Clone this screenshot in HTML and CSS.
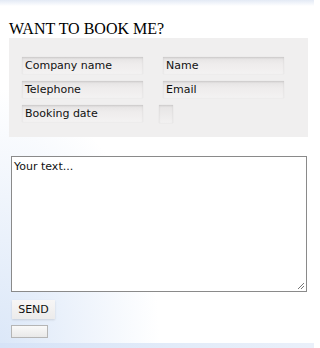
FILE: index.html
```html
<!DOCTYPE html>
<html>
<head>
<meta charset="utf-8">
<link rel="stylesheet" href="styles.css">
</head>
<body>
<div class="topband"></div>
<div class="page">
  <h1 class="title">WANT TO BOOK ME?</h1>
  <div class="panel">
    <div class="grid">
      <div class="field">Company name</div>
      <div class="field">Name</div>
      <div class="field">Telephone</div>
      <div class="field">Email</div>
      <div class="field">Booking date</div>
      <div class="tiny"></div>
    </div>
  </div>
  <div class="message"><span>Your text...</span><svg class="grip" width="9" height="9" viewBox="0 0 9 9"><path d="M8 2 L2 8 M8 5 L5 8" stroke="#777" stroke-width="1"/></svg></div>
  <div class="send">SEND</div>
  <div class="blank"></div>
</div>
<div class="bottomband"></div>
</body>
</html>
```
FILE: styles.css
```css
html, body {
  margin: 0;
  padding: 0;
}
body {
  width: 314px;
  height: 348px;
  overflow: hidden;
  display: flex;
  flex-direction: column;
  background:
    radial-gradient(ellipse 160px 260px at 0% 100%, #dbe7f8 0%, rgba(255,255,255,0) 100%),
    #ffffff;
}
.topband {
  height: 6px;
  flex: none;
  background: linear-gradient(to bottom, #e3eaf5 0%, #f6f8fc 70%, #ffffff 100%);
}
.page {
  flex: 1;
  padding-left: 9px;
  padding-top: 14px;
}
.title {
  margin: 0;
  font-family: "Liberation Serif", serif;
  font-weight: normal;
  font-size: 16px;
  line-height: 18px;
  color: #000;
}
.panel {
  width: 299px;
  height: 99px;
  box-sizing: border-box;
  background: #f0efef;
  padding: 19px 0 0 13px;
}
.grid {
  display: grid;
  grid-template-columns: 121px 121px;
  column-gap: 20px;
  row-gap: 7px;
  align-items: start;
}
.field {
  height: 17px;
  box-sizing: border-box;
  padding-left: 3px;
  font-family: "DejaVu Sans", sans-serif;
  font-size: 11px;
  line-height: 17px;
  color: #111;
  background: linear-gradient(to bottom, #e4e2e2 0%, #eeecec 40%, #f3f2f2 100%);
  box-shadow: inset 0 1px 2px rgba(0,0,0,0.12), 0 0 1px rgba(0,0,0,0.08);
}
.tiny {
  width: 14px;
  height: 18px;
  margin-left: -4px;
  background: linear-gradient(to bottom, #e6e4e4 0%, #f2f1f1 100%);
  box-shadow: inset 0 1px 2px rgba(0,0,0,0.12), 0 0 1px rgba(0,0,0,0.1);
}
.message {
  position: relative;
  margin-top: 19px;
  margin-left: 2px;
  width: 296px;
  height: 136px;
  box-sizing: border-box;
  border: 1px solid #8a8a8a;
  background: #fff;
  padding: 3px 2px;
  font-family: "DejaVu Sans", sans-serif;
  font-size: 11px;
  line-height: 13px;
  color: #111;
}
.grip {
  position: absolute;
  right: 1px;
  bottom: 1px;
}
.send {
  margin-top: 8px;
  margin-left: 3px;
  width: 43px;
  height: 19px;
  font-family: "DejaVu Sans", sans-serif;
  font-size: 11px;
  line-height: 19px;
  text-align: center;
  color: #111;
  background: linear-gradient(to bottom, #f7f6f6 0%, #ecebeb 100%);
  box-shadow: 0 1px 2px rgba(0,0,0,0.12);
}
.blank {
  margin-top: 6px;
  margin-left: 2px;
  width: 37px;
  height: 13px;
  box-sizing: border-box;
  border: 1px solid #b5b5b5;
  background: linear-gradient(to bottom, #f9f9f9 0%, #e9e9e9 100%);
}
.bottomband {
  flex: none;
  height: 5px;
  background: linear-gradient(to right, #d6e3f7 0%, #e3ecf9 60%, #eaf0fa 100%);
}
```
